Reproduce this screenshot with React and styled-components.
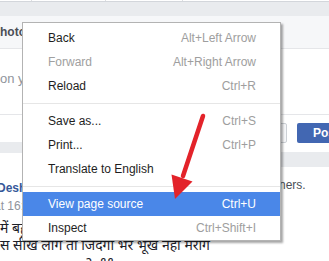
import React from "react";
import styled, { createGlobalStyle } from "styled-components";

const GlobalStyle = createGlobalStyle`
  html, body {
    margin: 0;
    padding: 0;
    background: #fff;
  }
  body {
    font-family: "Liberation Sans", Arial, sans-serif;
  }
  #root {
    position: relative;
    width: 329px;
    height: 261px;
    overflow: hidden;
  }
`;

const menuItems = [
  { label: "Back", shortcut: "Alt+Left Arrow" },
  { label: "Forward", shortcut: "Alt+Right Arrow", disabled: true },
  { label: "Reload", shortcut: "Ctrl+R" },
  { separator: true },
  { label: "Save as...", shortcut: "Ctrl+S" },
  { label: "Print...", shortcut: "Ctrl+P" },
  { label: "Translate to English" },
  { separator: true },
  { label: "View page source", shortcut: "Ctrl+U", active: true },
  { label: "Inspect", shortcut: "Ctrl+Shift+I" },
];

const topCells = [31, 73, 76];

export default function App() {
  return (
    <>
      <GlobalStyle />
      <Page>
        <TopStrip>
          {topCells.map((w, i) => (
            <TopCell key={i} style={{ width: w }} />
          ))}
        </TopStrip>
        <Band $h={14} />
        <Tabs>
          <TabLabel>Photo/Video</TabLabel>
        </Tabs>
        <Prompt>on your mind?</Prompt>
        <Split>
          <LeftCol>
            <Band $h={27} $color="#fff" />
            <Band $h={11} />
            <PostHead>
              <Name>Deshraj Singh</Name>
              <Time>at 16:25</Time>
            </PostHead>
            <PostText>
              <p>में बहुत बड़ा फर्क है</p>
              <p>स सीख लोगे तो जिंदगी भर भूखे नहीं मरोगे</p>
              <p className="sign">२..९९</p>
            </PostText>
          </LeftCol>
          <RightCol>
            <Footer>
              <Select />
              <PostButton>Post</PostButton>
            </Footer>
            <Band $h={15} />
            <Partners>ners.</Partners>
          </RightCol>
        </Split>
      </Page>

      <Menu>
        {menuItems.map((item, i) =>
          item.separator ? (
            <Separator key={i} />
          ) : (
            <Item key={i} $disabled={item.disabled} $active={item.active}>
              <span>{item.label}</span>
              {item.shortcut && (
                <Shortcut $active={item.active}>{item.shortcut}</Shortcut>
              )}
            </Item>
          )
        )}
      </Menu>

      <Arrow viewBox="0 0 329 261" width="329" height="261">
        <line
          x1="203"
          y1="116"
          x2="183"
          y2="176"
          stroke="#e3232a"
          strokeWidth="4.5"
          strokeLinecap="round"
        />
        <polygon points="171.5,174.5 192.5,181.5 175,199" fill="#e3232a" />
      </Arrow>
    </>
  );
}

const Page = styled.div`
  width: 329px;
  height: 261px;
  overflow: hidden;
  background: #fff;
`;

const TopStrip = styled.div`
  display: flex;
  height: 1px;
  border-bottom: 1px solid #d3d6db;
`;

const TopCell = styled.div`
  border-right: 1px solid #dddfe2;
`;

const Band = styled.div`
  height: ${(p) => p.$h}px;
  background: ${(p) => p.$color || "#e9ebee"};
`;

const Tabs = styled.div`
  display: flex;
  align-items: center;
  height: 32px;
  background: #f6f7f9;
  border-bottom: 1px solid #e5e6e9;
`;

const TabLabel = styled.div`
  text-indent: -8px;
  font-size: 12px;
  font-weight: bold;
  color: #4b4f56;
  white-space: nowrap;
`;

const Prompt = styled.div`
  display: flex;
  align-items: center;
  height: 59px;
  padding-bottom: 6px;
  border-bottom: 1px solid #e5e6e9;
  font-size: 13px;
  color: #90949c;
  white-space: nowrap;
`;

const Split = styled.div`
  display: grid;
  grid-template-columns: 240px 89px;
`;

const LeftCol = styled.div`
  display: flex;
  flex-direction: column;
`;

const RightCol = styled.div`
  display: flex;
  flex-direction: column;
  overflow: hidden;
`;

const PostHead = styled.div`
  display: flex;
  flex-direction: column;
  gap: 2px;
  padding-top: 27px;
  white-space: nowrap;
`;

const Name = styled.div`
  text-indent: -3px;
  font-size: 12px;
  line-height: 16px;
  font-weight: bold;
  color: #365899;
`;

const Time = styled.div`
  text-indent: -6px;
  font-size: 12px;
  line-height: 16px;
  color: #90949c;
`;

const PostText = styled.div`
  padding-top: 5px;
  font-family: "Noto Sans", "Noto Sans Devanagari", "Lohit Devanagari", sans-serif;
  font-size: 14px;
  line-height: 17px;
  color: #1d2129;
  white-space: nowrap;
  p {
    margin: 0;
  }
  .sign {
    padding-left: 85px;
  }
`;

const Footer = styled.div`
  display: flex;
  gap: 10px;
  padding: 8px 0 9px 7px;
`;

const Select = styled.div`
  flex: none;
  width: 38px;
  height: 18px;
  border: 1px solid #ccd0d5;
  border-radius: 2px;
  background: #f6f7f9;
`;

const PostButton = styled.div`
  flex: none;
  width: 50px;
  height: 20px;
  padding-left: 16px;
  border-radius: 2px;
  background: #4267b2;
  color: #fff;
  font-size: 12px;
  font-weight: bold;
  line-height: 20px;
`;

const Partners = styled.div`
  padding: 10px 0 0 39px;
  font-size: 12px;
  line-height: 16px;
  color: #4b4f56;
`;

const Menu = styled.div`
  position: absolute;
  left: 22px;
  top: 22px;
  width: 257px;
  padding: 3px 0 0;
  background: #fff;
  border: 1px solid #b3b3b3;
  box-shadow: 2px 2px 2px rgba(0, 0, 0, 0.35);
  font-family: "Liberation Sans", Arial, sans-serif;
  font-size: 12px;
`;

const Item = styled.div`
  display: flex;
  align-items: center;
  justify-content: space-between;
  height: 24px;
  padding: 0 24px 0 25px;
  color: ${(p) => (p.$active ? "#fff" : p.$disabled ? "#a0a0a0" : "#1e1e1e")};
  background: ${(p) => (p.$active ? "#4a87e8" : "transparent")};
`;

const Shortcut = styled.span`
  color: ${(p) => (p.$active ? "#fff" : "#9e9e9e")};
`;

const Separator = styled.div`
  height: 1px;
  margin: 5px 0;
  background: #e6e6e6;
`;

const Arrow = styled.svg`
  position: absolute;
  left: 0;
  top: 0;
  pointer-events: none;
`;
